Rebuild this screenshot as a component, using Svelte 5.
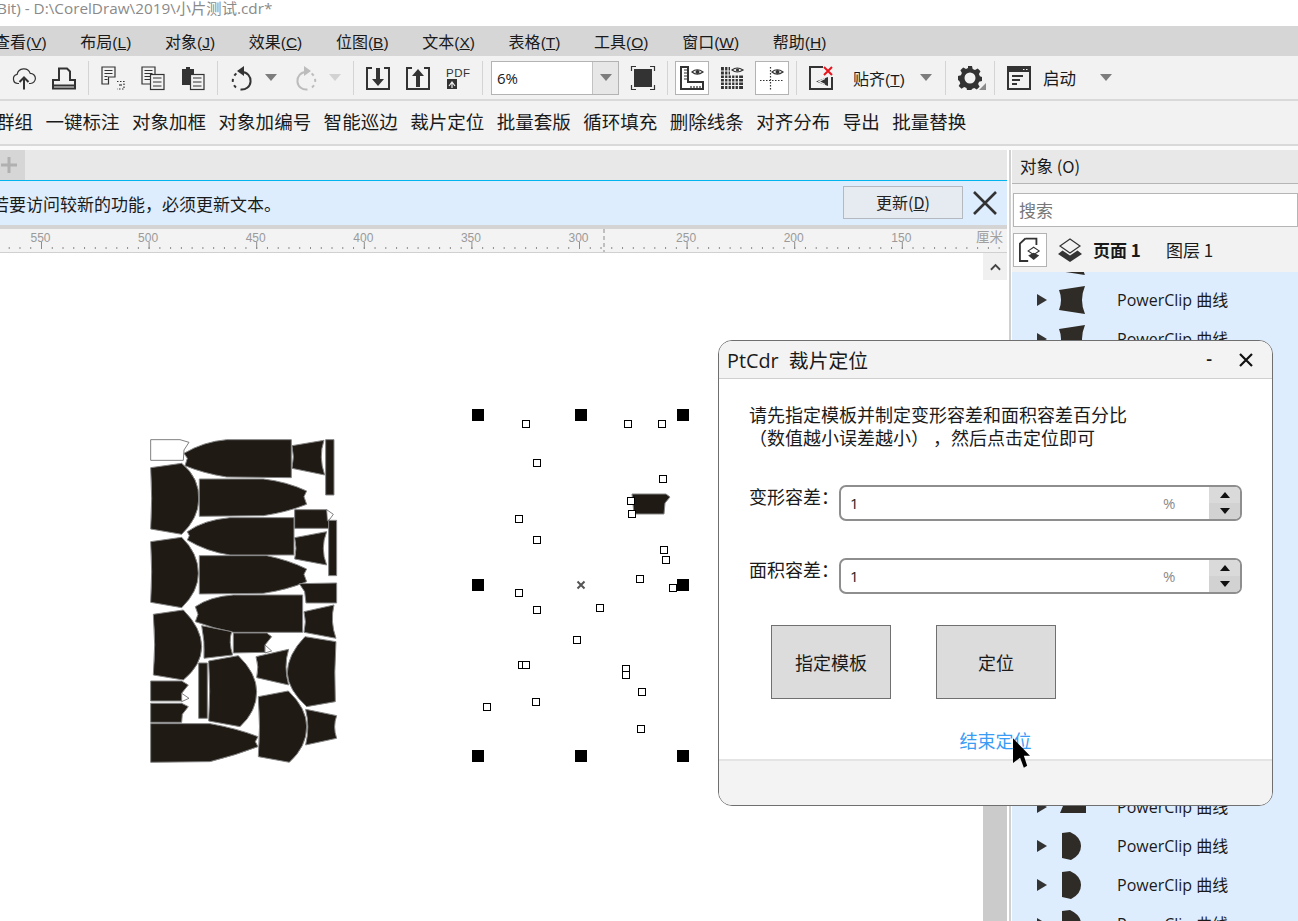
<script>
  const menus = [
    ['查看', 'V'], ['布局', 'L'], ['对象', 'J'], ['效果', 'C'], ['位图', 'B'],
    ['文本', 'X'], ['表格', 'T'], ['工具', 'O'], ['窗口', 'W'], ['帮助', 'H']
  ];
  const tools = ['群组', '一键标注', '对象加框', '对象加编号', '智能巡边', '裁片定位', '批量套版', '循环填充', '删除线条', '对齐分布', '导出', '批量替换'];

  // ruler: 10 divisions per label, right to left from 550
  const rulerStep = 107.6;
  const rulerStart = 41.5;
  const labels = [550, 500, 450, 400, 350, 300, 250, 200, 150];
  const minorTicks = [];
  for (let i = -3; i < 90; i++) minorTicks.push(rulerStart + i * rulerStep / 10);

  // garment pieces, traced at 3x from (130,425)
  const pieces = [
    'M162 85Q220 50 290 44L484 44L484 158L290 156Q220 145 165 122L172 100Z',
    'M486 62L582 46Q565 95 584 150L486 130Q494 95 486 62Z',
    'M587 44L612 44L612 210L587 210Z',
    'M62 128L155 115Q210 160 206 225Q205 280 155 328L62 312Q68 220 62 128Z',
    'M208 162L400 162Q470 170 530 198L522 215L530 238Q470 262 400 272L208 274Z',
    'M172 320Q220 285 300 278L492 278L492 390L300 390Q230 380 172 345L178 332Z',
    'M494 254L590 254L598 290L600 310L494 310Z',
    'M596 286L620 286L620 452L596 452Z',
    'M494 338L590 320Q570 370 590 420L494 402Q502 370 494 338Z',
    'M62 350L155 337Q205 385 205 445Q205 500 155 548L62 532Q68 440 62 350Z',
    'M208 392L410 392Q475 405 530 432L522 448L530 470Q470 495 400 505L208 507Z',
    'M508 476L620 474L620 534L528 534L524 500Z',
    'M196 545Q240 515 310 510L518 510L518 622L310 622Q250 610 196 590L204 568Z',
    'M522 560L612 540Q600 590 618 640L522 622Q530 590 522 560Z',
    'M70 568L160 555Q215 610 215 665Q215 720 160 765L70 750Q78 660 70 568Z',
    'M215 602L305 620Q295 650 308 690L222 700Q225 650 215 602Z',
    'M310 624L410 624L425 635L405 660L405 682L310 684Z',
    'M378 695L476 673Q460 725 476 780L380 758Q388 725 378 695Z',
    'M618 650L525 635Q472 690 472 745Q475 795 530 845L616 830Q612 740 618 650Z',
    'M206 714L232 714L232 880L206 880Z',
    'M236 708L325 692Q380 745 380 800Q380 860 330 905L236 888Q242 800 236 708Z',
    'M62 768L155 768L175 780L155 805L155 828L62 828Z',
    'M62 835L155 835L175 845L157 868L155 892L62 892Z',
    'M62 896L240 896Q320 910 384 935L376 950L384 965Q320 990 240 1010L62 1012Z',
    'M385 815L475 798Q530 850 530 905Q530 965 478 1012L385 995Q392 905 385 815Z',
    'M527 853L620 872Q608 905 620 940L527 960Q540 905 527 853Z'
  ];
  // unfilled wedges and the one empty piece
  const blanks = [
    'M62 44L150 44L177 52L162 75L160 106L62 106Z',
    'M590 254L610 268L600 282L592 288Z',
    'M405 660L425 678L405 684Z',
    'M155 805L177 820L155 830Z'
  ];

  const bigHandles = [
    [478, 415], [581, 415], [683, 415], [478, 585], [683, 585], [478, 756], [581, 756], [683, 756]
  ];
  const nodes = [
    [526, 424], [628, 424], [662, 424], [537, 463], [663, 479], [631, 501], [632, 514], [519, 519],
    [537, 540], [664, 550], [666, 560], [640, 579], [673, 588], [519, 593], [537, 610], [600, 608],
    [577, 640], [522, 665], [526, 665], [626, 669], [626, 675], [642, 692], [536, 702], [487, 707],
    [641, 729]
  ];

  const thumbs = {
    wide: 'M2 20L8 6L28 3L28 20Z',
    trap: 'M1 4L27 0Q21 14 27 28L1 24Q5 14 1 4Z',
    round: 'M4 1L12 0Q23 5 23 14Q23 23 13 28L4 26Z'
  };
  const rows = ['trap', 'trap', 'trap', 'trap', 'trap', 'round', 'round', 'round', 'round', 'round', 'round', 'round', 'round', 'round', 'wide', 'round', 'round', 'round'];
</script>

<div class="app">
  <div class="titlebar">Bit) - D:\CorelDraw\2019\小片测试.cdr*</div>

  <div class="menubar">
    {#each menus as [name, key]}
      <span>{name}<span class="paren">(<u>{key}</u>)</span></span>
    {/each}
  </div>

  <div class="toolbar">
    <svg class="ic" viewBox="0 0 24 24"><path class="ln" d="M7 17.5H6a4.6 4.6 0 0 1-.9-9.1A6.8 6.8 0 0 1 18.2 7.4a5 5 0 0 1 .3 10.1H17"/><path class="thick" d="M12 23.5V12M7.5 16l4.5-4.5 4.5 4.5"/></svg>
    <svg class="ic" viewBox="0 0 24 24"><path class="thick" d="M1 22.500V14h6V2.500h8l3 3V14h5v8.500zM1 19.500h22"/></svg>
    <i class="sep"></i>
    <svg class="ic" viewBox="0 0 24 24"><path class="ln" d="M1 1h13v10H7.500v7H1zM3.500 4.500h8M3.500 7.500h8M3.500 10.500h3M3.500 13.500h3"/><path class="ln dot" d="M16 15.500h7v7.500h-7"/><path class="ln" d="M18 19h3"/></svg>
    <svg class="ic" viewBox="0 0 24 24"><path class="ln" d="M1 1h13v17H1zM3.500 4.500h8M3.500 7.500h8M3.500 10.500h8M3.500 13.500h8"/><rect class="ln paper" x="9.500" y="8.500" width="13.500" height="15"/><path class="ln" d="M12 12h8.500M12 16h8.500M12 20h8.500"/></svg>
    <svg class="ic" viewBox="0 0 24 24"><path class="solid" d="M1 3h4V1h4v2h4v16H1z"/><rect class="ln paper" x="9.500" y="8.500" width="13.500" height="15"/><path class="ln" d="M12 12h8.500M12 16h8.500M12 20h8.500"/></svg>
    <i class="sep"></i>
    <svg class="ic" viewBox="0 0 24 24"><path class="thick" d="M12 6a8.800 8.800 0 1 1-1.500 17.500"/><path class="thick dash" d="M6 21.500A8.800 8.800 0 0 1 6.500 7.500"/><path class="solid" d="M14 0L7 5l7 5z"/></svg>
    <i class="caret"></i>
    <svg class="ic redo" viewBox="0 0 24 24"><g transform="matrix(-1 0 0 1 24 0)"><path class="thick" d="M12 6a8.800 8.800 0 1 1-1.500 17.500"/><path class="thick dash" d="M6 21.500A8.800 8.800 0 0 1 6.500 7.500"/><path class="solid" d="M14 0L7 5l7 5z"/></g></svg>
    <i class="caret off"></i>
    <i class="sep"></i>
    <svg class="ic" viewBox="0 0 24 24"><path class="thick" d="M6 2H1v21h22V2h-5"/><path class="solid" d="M10 2h4v11h4l-6 7-6-7h4z"/></svg>
    <svg class="ic" viewBox="0 0 24 24"><path class="thick" d="M6 2H1v21h22V2h-5"/><path class="solid" d="M10 21h4V10h4L12 3 6 10h4z"/></svg>
    <svg class="ic" viewBox="0 0 24 24"><text class="pdf" x="0" y="10.500">PDF</text><path class="solid" d="M1 13h10v10H1z"/><path class="cut" d="M3 20l3-4 3 4M6 17v5"/></svg>
    <i class="sep"></i>
    <div class="combo"><span class="combo-val">6%</span><span class="combo-btn"><i class="caret"></i></span></div>
    <svg class="ic full" viewBox="0 0 24 24"><path class="ln" d="M.5 5V.5H5M19 .5h4.500V5M.5 19v4.500H5M19 23.500h4.500V19"/><rect class="solid" x="3" y="3" width="18" height="18"/></svg>
    <i class="sep"></i>
    <span class="toggle">
      <svg class="ic" viewBox="0 0 24 24"><path class="thick" d="M1 1h7v15h15v7H1z"/><path class="ln" d="M4 4h4M4 7h3M4 10h4M4 13h3M11 20v3M14 20v3M17 20v3M20 20v3"/><path class="ln" d="M12 6q5-4.500 11 0q-6 4.500-11 0z"/><circle class="solid" cx="17.500" cy="6" r="2"/></svg>
    </span>
    <svg class="ic grid" viewBox="0 0 24 24"><path class="solid" d="M1 1h9v8h13v14H1z"/><path class="cut" d="M4.500 1v22M8 1v22M11.500 9v14M15 9v14M18.500 9v14M1 5h9M1 9h22M1 12.500h22M1 16h22M1 19.500h22"/><path class="ln paper" d="M12 4q5-4 11 0q-6 4-11 0z"/><circle class="solid" cx="17.500" cy="4" r="1.600"/></svg>
    <span class="toggle guides">
      <svg class="ic" viewBox="0 0 24 24"><path class="ln dot" d="M10.500 1v23M0 14.500h24"/><path class="ln" d="M12 6q5-4.500 11 0q-6 4.500-11 0z"/><circle class="solid" cx="17.500" cy="6" r="2"/></svg>
    </span>
    <i class="sep snap-sep"></i>
    <svg class="ic" viewBox="0 0 24 24"><path class="thick" d="M14 1H1v22h22V11"/><path class="solid" d="M19 20V11L7 15.500z"/><path class="cut" d="M16 12.500L10 15.500l6 3"/><path class="redx" d="M15 1l8 8M23 1l-8 8"/></svg>
    <span class="tb-text snap-text">贴齐<span class="paren">(<u>T</u>)</span></span>
    <i class="caret snap-caret"></i>
    <i class="sep gear-sep"></i>
    <svg class="gear" viewBox="0 0 28 24"><path class="solid" fill-rule="evenodd" d="M10 0h4l.7 3 2.300 1 2.700-1.600 2.800 2.800L20.900 8l1 2.300 2.100.7v4l-2.900.7-1 2.300 1.500 2.700-2.800 2.800-2.600-1.500-2.300.9-.7 2.100h-4l-.7-2.900-2.300-1-2.700 1.600-2.800-2.800 1.600-2.700-1-2.300L0 14v-4l2.900-.7 1-2.300-1.500-2.800L5.200 1.400 8 3l2-1zM12 6.500a5.500 5.500 0 1 0 0 11 5.500 5.500 0 0 0 0-11z"/><path class="tri" d="M28 17v7h-7z"/></svg>
    <i class="sep win-sep"></i>
    <svg class="ic" viewBox="0 0 24 24"><path class="thick" d="M1 1h22v22H1z"/><path class="solid" d="M1 1h22v5H1z"/><path class="cut" d="M16 3.500h1.500M19 3.500h1.500"/><path class="thick" d="M5 10h11M5 14h8M5 18h5"/></svg>
    <span class="tb-text start-text">启动</span>
    <i class="caret start-caret"></i>
  </div>

  <div class="toolbar2">
    {#each tools as t}
      <span>{t}</span>
    {/each}
  </div>

  <div class="gap"></div>

  <div class="body">
    <div class="left">
      <div class="tabs"><span class="add"><svg viewBox="0 0 16 16"><path d="M8 0v16M0 8h16"/></svg></span></div>
      <div class="notice">
        <span class="notice-text">若要访问较新的功能，必须更新文本。</span>
        <button class="update">更新(<u>D</u>)</button>
        <svg class="notice-x" viewBox="0 0 24 24"><path d="M1 1l22 22M23 1L1 23"/></svg>
      </div>
      <div class="rule-gap"></div>
      <svg class="ruler" viewBox="0 0 1007 23">
        {#each minorTicks as x}
          <path class="tick" d="M{x} 18v2"/>
        {/each}
        {#each labels as label, i}
          <path class="tick" d="M{rulerStart + i * rulerStep} 13v7"/>
          <text class="rule-num" x={rulerStart + i * rulerStep - 1} y="13">{label}</text>
        {/each}
        <path class="tick" stroke-dasharray="4 3" d="M604 0v24"/>
        <text class="rule-unit" x="976" y="13">厘米</text>
      </svg>
      <div class="work">
        <svg class="canvas" viewBox="0 253 983 668">
          <g transform="translate(130 425) scale(.3333)">
            {#each pieces as d}
              <path class="piece" {d}/>
            {/each}
            {#each blanks as d}
              <path class="white-piece" {d}/>
            {/each}
          </g>
          <path class="piece thin" d="M632 494L666 494L670 497L665 503L664 514L634 514Z"/>
          {#each bigHandles as [x, y]}
            <rect x={x - 6} y={y - 6} width="12" height="12"/>
          {/each}
          {#each nodes as [x, y]}
            <rect class="node" x={x - 3.5} y={y - 3.5} width="7" height="7"/>
          {/each}
          <path class="centre" d="M577.500 581.500l7 7M584.500 581.500l-7 7"/>
        </svg>
        <div class="scroll">
          <div class="scroll-up"><svg viewBox="0 0 12 8"><path d="M1 7l5-5 5 5"/></svg></div>
          <div class="scroll-space"></div>
          <div class="scroll-thumb"></div>
        </div>
      </div>
    </div>

    <div class="splitter"></div>

    <div class="panel">
      <div class="panel-head">对象 (O)</div>
      <div class="search">搜索</div>
      <div class="layer-row">
        <span class="page-btn">
          <svg viewBox="0 0 24 28"><path class="thick" d="M7 1.500h12v7M7 1.500L1 7v19h9"/><path class="paper-ln" d="M16 11l6 4-6 4-6-4z"/><path class="solid" d="M10 20l6-3 6 3-6 5z"/></svg>
        </span>
        <svg class="layers" viewBox="0 0 24 24"><path class="ln" d="M12 1l10 7-10 7-10-7z"/><path class="solid" d="M4.500 12.500l7.500 5 7.500-5L24 16l-12 8L0 16z"/></svg>
        <b>页面 1</b>
        <span class="layer-name">图层 1</span>
      </div>
      <div class="list">
        <div class="list-inner">
          {#each rows as kind}
            <div class="row">
              <i class="expand"></i>
              <svg class="thumb" viewBox="0 0 29 28"><path d={thumbs[kind]}/></svg>
              <span>PowerClip 曲线</span>
            </div>
          {/each}
        </div>
      </div>
    </div>
  </div>

  <div class="dialog">
    <div class="dlg-title">
      <span class="dlg-name">PtCdr&nbsp; 裁片定位</span>
      <span class="dlg-min">-</span>
      <svg class="dlg-x" viewBox="0 0 14 14"><path d="M1 1l12 12M13 1L1 13"/></svg>
    </div>
    <div class="dlg-body">
      <p class="hint">请先指定模板并制定变形容差和面积容差百分比<br/>（数值越小误差越小）&nbsp;，然后点击定位即可</p>
      {#each ['变形容差', '面积容差'] as label}
        <div class="field">
          <span class="field-label">{label}：</span>
          <div class="spin">
            <input value="1" />
            <span class="unit">%</span>
            <span class="spin-btns">
              <span class="up"><i></i></span>
              <span class="down"><i></i></span>
            </span>
          </div>
        </div>
      {/each}
      <div class="actions">
        <button class="btn">指定模板</button>
        <button class="btn">定位</button>
      </div>
      <div class="finish">结束定位</div>
    </div>
    <div class="dlg-foot"></div>
  </div>

  <svg class="cursor" viewBox="0 0 18 31"><path d="M0 0L18 18.500H11.500L15 29L11.500 31L7.500 20.500L0 26Z"/></svg>
</div>

<style>
  :global(body) {
    margin: 0;
    background: #fff;
  }

  .app {
    position: relative;
    width: 1298px;
    height: 921px;
    overflow: hidden;
    display: flex;
    flex-direction: column;
    font-family: "Noto Sans CJK SC", "Noto Sans", sans-serif;
    color: #1a1a1a;
    background: #fff;
  }

  /* ── Top chrome ─────────────── */
  .titlebar {
    height: 26px;
    line-height: 16px;
    margin-left: -3px;
    font-size: 15.300px;
    font-family: "Open Sans", "Noto Sans CJK SC", sans-serif;
    color: #8a8a8a;
    white-space: nowrap;
  }

  .menubar {
    height: 30px;
    background: #d6d6d6;
    display: flex;
    align-items: center;
    gap: 33.650px;
    margin-left: -6px;
    font-size: 16px;
    white-space: nowrap;
  }

  .paren {
    font-family: "Liberation Sans", sans-serif;
    font-size: 15.500px;
  }

  .toolbar {
    height: 43px;
    background: #f2f2f2;
    border-bottom: 2px solid #d9d9d9;
    box-sizing: content-box;
    display: flex;
    align-items: center;
    padding-left: 12px;
  }

  .ic {
    width: 24px;
    height: 24px;
    flex: none;
    overflow: visible;
  }

  .ic + .ic {
    margin-left: 16px;
  }

  .sep {
    width: 1px;
    height: 34px;
    margin: 0 12px;
    background: #d4d4d4;
    flex: none;
  }

  .ln {
    fill: none;
    stroke: #333;
    stroke-width: 1.200;
  }

  .thick {
    fill: none;
    stroke: #333;
    stroke-width: 2;
  }

  .dash {
    stroke-dasharray: 3 3.500;
  }

  .dot {
    stroke-dasharray: 1.500 1.500;
  }

  .solid {
    fill: #333;
  }

  .paper {
    fill: #f2f2f2;
  }

  .cut {
    fill: none;
    stroke: #f2f2f2;
    stroke-width: 1.200;
  }

  .tri {
    fill: #8b8b8b;
  }

  .redx {
    fill: none;
    stroke: #e8141c;
    stroke-width: 2;
  }

  .pdf {
    font: 11.500px "Liberation Sans", sans-serif;
    letter-spacing: 0.5px;
    fill: #333;
  }

  .caret {
    width: 0;
    height: 0;
    margin-left: 11px;
    flex: none;
    border-left: 6px solid transparent;
    border-right: 6px solid transparent;
    border-top: 7px solid #7d7d7d;
  }

  .caret.off {
    border-top-color: #d2d2d2;
  }

  .redo {
    margin-left: 17px;
    opacity: 0.28;
  }

  .ic + .ic.redo {
    margin-left: 17px;
  }

  .combo {
    width: 128px;
    height: 34px;
    margin-left: -4px;
    box-sizing: border-box;
    border: 1px solid #b3b3b3;
    background: #fff;
    display: flex;
    align-items: center;
    flex: none;
  }

  .combo-val {
    flex: 1;
    padding-left: 5px;
    font: 15px "Open Sans", sans-serif;
  }

  .combo-btn {
    width: 25px;
    height: 100%;
    background: #e7e7e7;
    border-left: 1px solid #c2c2c2;
    display: flex;
    align-items: center;
    justify-content: center;
  }

  .combo-btn .caret {
    margin: 0;
  }

  .full {
    margin-left: 12px;
  }

  .toggle {
    width: 34px;
    height: 34px;
    margin-left: -5px;
    box-sizing: border-box;
    border: 1px solid #b3b3b3;
    background: #fff;
    display: flex;
    align-items: center;
    justify-content: center;
    flex: none;
  }

  .grid {
    margin-left: 11px;
  }

  .toggle.guides {
    margin-left: 11px;
  }

  .snap-sep {
    margin: 0 12px 0 7px;
  }

  .tb-text {
    font-size: 16px;
    white-space: nowrap;
  }

  .snap-text {
    margin-left: 20px;
    width: 52px;
  }

  .snap-caret {
    margin-left: 15px;
  }

  .gear-sep {
    margin: 0 12px 0 13px;
  }

  .gear {
    width: 28px;
    height: 24px;
    flex: none;
  }

  .win-sep {
    margin: 0 12px 0 8px;
  }

  .start-text {
    margin-left: 12px;
    width: 33px;
    font-size: 16.500px;
  }

  .start-caret {
    margin-left: 24px;
  }

  .toolbar2 {
    height: 43px;
    box-sizing: content-box;
    background: #f2f2f2;
    border-bottom: 2px solid #d9d9d9;
    display: flex;
    align-items: center;
    gap: 12.400px;
    margin-left: -4px;
    font-size: 18.550px;
    line-height: 39px;
    white-space: nowrap;
  }

  .toolbar2 span {
    margin-top: -4px;
  }

  .gap {
    height: 4px;
    background: #fafafa;
  }

  .body {
    flex: 1;
    min-height: 0;
    display: flex;
  }

  /* ── Document area ───────────── */
  .left {
    width: 1007px;
    flex: none;
    display: flex;
    flex-direction: column;
  }

  .tabs {
    height: 30px;
    background: #e8e8e8;
    flex: none;
  }

  .add {
    display: flex;
    width: 25px;
    height: 30px;
    background: #d6d6d6;
    align-items: center;
  }

  .add svg {
    width: 16px;
    height: 16px;
    margin-left: 1px;
  }

  .add path {
    stroke: #b0b0b0;
    stroke-width: 3;
  }

  .notice {
    height: 44px;
    flex: none;
    border-top: 1px solid #00b4f0;
    background: #deedfe;
    display: flex;
    align-items: center;
    font-size: 17px;
    white-space: nowrap;
  }

  .notice-text {
    width: 851px;
    margin-left: -8px;
    flex: none;
  }

  .update {
    width: 120px;
    height: 33px;
    margin-top: -2px;
    border: 1px solid #b4b9bf;
    background: #e6ebf1;
    font: 16px "Noto Sans CJK SC", sans-serif;
    color: #222;
    padding: 0;
  }

  .notice-x {
    width: 24px;
    height: 24px;
    margin-left: 10px;
  }

  .notice-x path {
    stroke: #333;
    stroke-width: 2.600;
    fill: none;
  }

  .rule-gap {
    height: 4px;
    flex: none;
    background: #d4d4d4;
  }

  .ruler {
    display: block;
    width: 1007px;
    height: 23px;
    flex: none;
    background: #f3f3f3;
    border-bottom: 1px solid #d0d0d0;
    box-sizing: content-box;
  }

  .tick {
    stroke: #8c8c8c;
    stroke-width: 1;
    fill: none;
  }

  .rule-num {
    font: 12px "Liberation Sans", sans-serif;
    fill: #9a9a9a;
    text-anchor: middle;
  }

  .rule-unit {
    font: 13.500px "Noto Sans CJK SC", sans-serif;
    fill: #a0a0a0;
  }

  .work {
    flex: 1;
    min-height: 0;
    display: flex;
  }

  .canvas {
    width: 983px;
    height: 668px;
    flex: none;
    display: block;
  }

  .white-piece {
    fill: #fff;
    stroke: #666;
    stroke-width: 2.500;
  }

  .piece {
    fill: #1f1a14;
    stroke: #858585;
    stroke-width: 3;
  }

  .piece.thin {
    stroke-width: 1;
  }

  .node {
    fill: #fff;
    stroke: #000;
    stroke-width: 1;
  }

  .centre {
    stroke: #555;
    stroke-width: 2;
    fill: none;
  }

  .scroll {
    width: 24px;
    flex: none;
    display: flex;
    flex-direction: column;
  }

  .scroll-up {
    height: 27px;
    flex: none;
    background: #f0f0f0;
    display: flex;
    align-items: center;
    justify-content: center;
  }

  .scroll-up svg {
    width: 11px;
    height: 8px;
  }

  .scroll-up path {
    fill: none;
    stroke: #444;
    stroke-width: 2;
  }

  .scroll-space {
    height: 300px;
    flex: none;
    background: #fff;
  }

  .scroll-thumb {
    flex: 1;
    background: #cbcbcb;
  }

  .splitter {
    width: 5px;
    flex: none;
    box-sizing: border-box;
    border-left: 2px solid #fff;
    border-right: 1px solid #fff;
    background: #d0d0d0;
  }

  /* ── Objects docker ──────────── */
  .panel {
    flex: 1;
    min-width: 0;
    display: flex;
    flex-direction: column;
    background: #f2f2f2;
  }

  .panel-head {
    height: 33px;
    flex: none;
    background: #e8e8e8;
    border-bottom: 1px solid #b5b5b5;
    line-height: 33px;
    padding-left: 8px;
    font-size: 16.500px;
  }

  .search {
    height: 34px;
    flex: none;
    margin: 9px 0 0 1px;
    box-sizing: border-box;
    border: 1px solid #b5b5b5;
    background: #fff;
    line-height: 32px;
    padding-left: 5px;
    font-size: 17px;
    color: #777;
  }

  .layer-row {
    height: 45px;
    flex: none;
    display: flex;
    align-items: center;
    padding-left: 1px;
    font-size: 17px;
  }

  .page-btn {
    width: 34px;
    height: 34px;
    box-sizing: border-box;
    border: 1px solid #b3b3b3;
    background: #fff;
    display: flex;
    align-items: center;
    justify-content: center;
  }

  .page-btn svg {
    width: 22px;
    height: 26px;
  }

  .paper-ln {
    fill: #fff;
    stroke: #333;
    stroke-width: 1.200;
  }

  .layers {
    width: 24px;
    height: 24px;
    margin-left: 11px;
  }

  .layer-row b {
    margin-left: 11px;
    width: 73px;
  }

  .list {
    flex: 1;
    min-height: 0;
    overflow: hidden;
    background: #deedfe;
  }

  .list-inner {
    margin-top: -30.500px;
  }

  .row {
    height: 39px;
    display: flex;
    align-items: center;
    font: 16px "Open Sans", "Noto Sans CJK SC", sans-serif;
    white-space: nowrap;
  }

  .expand {
    margin-left: 25px;
    width: 0;
    height: 0;
    border-top: 6px solid transparent;
    border-bottom: 6px solid transparent;
    border-left: 10px solid #333;
    flex: none;
  }

  .thumb {
    width: 29px;
    height: 28px;
    margin-left: 11px;
    flex: none;
  }

  .thumb path {
    fill: #2f2c27;
  }

  .row span {
    margin: -2px 0 0 30px;
  }

  /* ── Floating dialog ─────────── */
  .dialog {
    position: absolute;
    left: 718px;
    top: 340px;
    width: 555px;
    height: 466px;
    box-sizing: border-box;
    border: 1px solid #6f6f6f;
    border-radius: 14px;
    background: #fff;
    overflow: hidden;
    display: flex;
    flex-direction: column;
  }

  .dlg-title {
    height: 38px;
    flex: none;
    box-sizing: border-box;
    background: #f3f3f3;
    border-bottom: 1px solid #cfcfcf;
    display: flex;
    align-items: center;
    padding-left: 8px;
  }

  .dlg-name {
    flex: 1;
    font: 19.800px "Open Sans", "Noto Sans CJK SC", sans-serif;
  }

  .dlg-min {
    font: 600 18px "Open Sans", sans-serif;
    margin-right: 27px;
    margin-top: -3px;
  }

  .dlg-x {
    width: 14px;
    height: 14px;
    margin-right: 19px;
  }

  .dlg-x path {
    stroke: #111;
    stroke-width: 2.200;
    fill: none;
  }

  .dlg-body {
    flex: 1;
    min-height: 0;
    display: flex;
    flex-direction: column;
  }

  .hint {
    margin: 24px 0 0 30px;
    font-size: 18px;
    line-height: 23px;
    white-space: nowrap;
  }

  .field {
    display: flex;
    align-items: center;
    margin: 36px 0 0 30px;
    height: 35px;
    font-size: 18px;
  }

  .field + .field {
    margin-top: 38px;
  }

  .field-label {
    width: 90px;
    flex: none;
    margin-top: -14px;
    white-space: nowrap;
  }

  .spin {
    width: 403px;
    height: 36px;
    box-sizing: border-box;
    border: 2px solid #8e8e8e;
    border-radius: 7px;
    display: flex;
    align-items: center;
    overflow: hidden;
    flex: none;
    background: #fff;
  }

  .spin input {
    flex: 1;
    min-width: 0;
    border: 0;
    outline: 0;
    background: transparent;
    padding: 0 0 0 9px;
    font: 15px "Open Sans", sans-serif;
    color: #222;
  }

  .unit {
    width: 46px;
    font: 15px "Open Sans", sans-serif;
    color: #8a8a8a;
  }

  .spin-btns {
    width: 31px;
    height: 100%;
    background: #dadada;
    display: flex;
    flex-direction: column;
  }

  .spin-btns span {
    flex: 1;
    display: flex;
    align-items: center;
    justify-content: center;
  }

  .spin-btns .down {
    background: #d2d2d2;
  }

  .up i,
  .down i {
    width: 0;
    height: 0;
    border-left: 5.500px solid transparent;
    border-right: 5.500px solid transparent;
  }

  .up i {
    border-bottom: 6px solid #111;
  }

  .down i {
    border-top: 6px solid #111;
  }

  .actions {
    display: flex;
    gap: 45px;
    margin: 32px 0 0 52px;
  }

  .btn {
    width: 120px;
    height: 74px;
    border: 1px solid #707070;
    background: #dcdcdc;
    font: 18px "Noto Sans CJK SC", sans-serif;
    color: #1a1a1a;
    padding: 0;
  }

  .finish {
    margin-top: 26px;
    text-align: center;
    font-size: 18px;
    line-height: 30px;
    color: #3a9cf5;
  }

  .dlg-foot {
    height: 46px;
    flex: none;
    box-sizing: border-box;
    background: #f3f3f3;
    border-top: 2px solid #e4e4e4;
  }

  .cursor {
    position: absolute;
    left: 1013px;
    top: 738px;
    width: 17px;
    height: 30px;
  }
</style>
